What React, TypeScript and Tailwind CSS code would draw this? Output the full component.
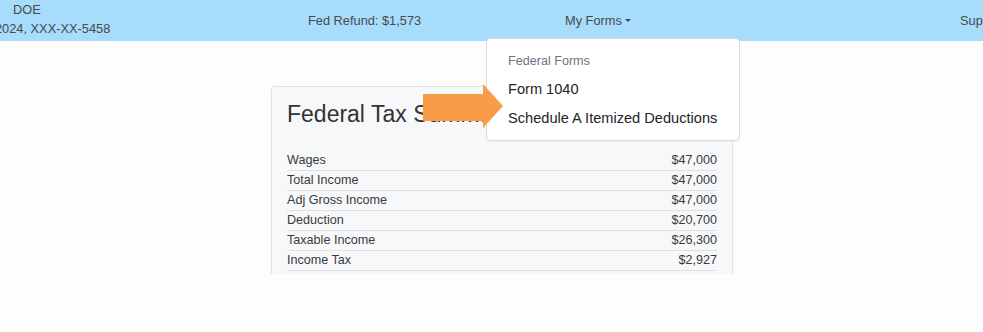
import React from "react";

const rows: [string, string][] = [
  ["Wages", "$47,000"],
  ["Total Income", "$47,000"],
  ["Adj Gross Income", "$47,000"],
  ["Deduction", "$20,700"],
  ["Taxable Income", "$26,300"],
  ["Income Tax", "$2,927"],
  ["Credits", "$1,000"],
  ["Total Tax", "$1,927"],
];

export default function App() {
  return (
    <div className="relative w-[983px] h-[332px] overflow-hidden bg-[#fdfdfd] font-['Liberation_Sans',Arial,sans-serif]">
      <nav className="flex h-[41px] items-center bg-[#a7dcfc] text-[12.8px] text-[#4a4a4a] whitespace-nowrap">
        <div className="-ml-[5px] mb-[4px] w-[313px] shrink-0 leading-[19px]">
          <div className="pl-[18px]">DOE</div>
          <div>2024, XXX-XX-5458</div>
        </div>
        <div className="w-[257px] shrink-0">Fed Refund: $1,573</div>
        <div className="w-[395px] shrink-0 flex items-center">
          My Forms
          <span className="ml-[3px] inline-block h-0 w-0 border-x-[3.8px] border-t-[3.8px] border-x-transparent border-t-[#4a4a4a]" />
        </div>
        <div className="shrink-0">Support</div>
      </nav>

      <main className="h-[233px] overflow-hidden">
        <div className="ml-[271px] mt-[45px] w-[462px] rounded-[4px] border border-[#e2e3e5] bg-[#f7f8f9] px-[15px] pt-[13px] pb-4">
          <h4 className="text-[23px] leading-[28px] text-[#333]">Federal Tax Summary</h4>
          <div className="mt-[23px] text-[12.6px] text-[#3a3a3a]">
            {rows.map(([k, v]) => (
              <div key={k} className="flex h-[20px] items-center justify-between border-b border-[#dfe1e4]">
                <span>{k}</span>
                <span>{v}</span>
              </div>
            ))}
          </div>
        </div>
      </main>

      <div className="absolute left-[486px] top-[38px] w-[254px] rounded-[4px] border border-[#d9d9d9] bg-white pt-[9px] pb-[7px] shadow-[0_1px_2px_rgba(0,0,0,0.04)]">
        <div className="h-[27px] px-[21px] text-[12.6px] leading-[27px] text-[#6c757d]">Federal Forms</div>
        <div className="h-[29px] px-[21px] text-[14.6px] leading-[29px] text-[#212529]">Form 1040</div>
        <div className="h-[29px] px-[21px] text-[14.6px] leading-[29px] text-[#212529]">Schedule A Itemized Deductions</div>
      </div>

      <svg className="absolute left-[423px] top-[84px]" width="81" height="45" viewBox="0 0 81 45">
        <polygon points="0,10 60,10 60,0 80,22 60,44 60,37 0,37" fill="#f89c4a" />
      </svg>
    </div>
  );
}
